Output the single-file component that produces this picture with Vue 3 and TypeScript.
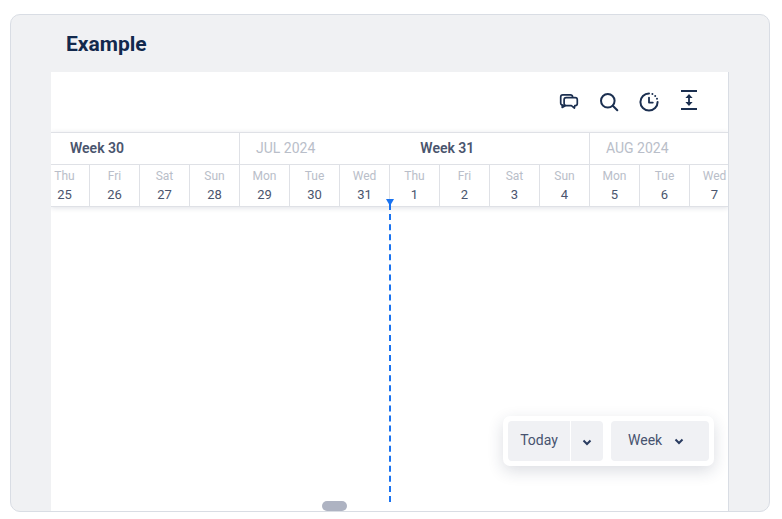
<script setup lang="ts">
interface Day { name: string; num: number }
const names = ['Thu', 'Fri', 'Sat', 'Sun', 'Mon', 'Tue', 'Wed']
const nums = [25, 26, 27, 28, 29, 30, 31, 1, 2, 3, 4, 5, 6, 7]
const days: Day[] = nums.map((num, i) => ({ name: names[i % 7], num }))
</script>

<template>
  <div class="page">
    <section class="card">
      <h1 class="title">Example</h1>
      <div class="panel">
        <div class="toolbar">
          <svg class="icon" viewBox="0 0 20 20" fill="none" stroke="#1b2f50" stroke-width="1.7" stroke-linejoin="round" stroke-linecap="round">
            <path d="M4.2 13.4 2.8 13C2 12.6 1.7 12 1.7 11.2V5C1.7 3.8 2.6 2.9 3.8 2.9H11.4C12.6 2.9 13.5 3.8 13.6 5" />
            <path d="M7.2 5.6H16.2C17.4 5.6 18.3 6.5 18.3 7.7V11.6C18.3 12.8 17.4 13.7 16.2 13.7H15.8L15.4 16.2 12.4 13.7H7.2C6 13.7 5.1 12.8 5.1 11.6V7.7C5.1 6.5 6 5.6 7.2 5.6Z" />
            <path d="M3.4 13.2 3.2 15.4 6.2 13.7" />
          </svg>
          <svg class="icon" viewBox="0 0 20 20" fill="none" stroke="#1b2f50" stroke-width="2" stroke-linecap="round">
            <circle cx="8.8" cy="8.8" r="6.8" />
            <path d="M13.8 13.8 18.3 18.3" />
          </svg>
          <svg class="icon" viewBox="0 0 20 20" fill="none" stroke="#1b2f50" stroke-width="2" stroke-linecap="round" stroke-linejoin="round">
            <path d="M10 1.4A8.6 8.6 0 1 0 18.6 10" />
            <path d="M10 5.6V10.6H13.8" stroke-width="1.8" />
            <path d="M13.4 2.1V2.1M16.2 4V4M18 6.8V6.8" />
          </svg>
          <svg class="icon tall" viewBox="0 0 20 20" fill="none" stroke="#1b2f50">
            <path d="M2 1H18M2 19H18" stroke-width="2" />
            <path d="M10 7V13" stroke-width="1.8" />
            <path d="M6.4 8 10 4 13.6 8ZM6.4 12 10 16 13.6 12Z" fill="#1b2f50" stroke="none" />
          </svg>
        </div>

        <div class="timeline">
          <div class="weeks">
            <div class="week week-first"><strong>Week 30</strong></div>
            <div class="week week-mid">
              <span class="month">JUL 2024</span>
              <strong>Week 31</strong>
            </div>
            <div class="week week-last"><span class="month">AUG 2024</span></div>
          </div>
          <div class="days">
            <div v-for="d in days" :key="d.name + d.num" class="day">
              <span class="day-name">{{ d.name }}</span>
              <span class="day-num">{{ d.num }}</span>
            </div>
          </div>
        </div>

        <div class="now-line">
          <span class="now-arrow"></span>
        </div>

        <div class="controls">
          <div class="split">
            <span class="today">Today</span>
            <span class="today-caret">
              <svg class="chevron" viewBox="0 0 10 7" fill="none" stroke="#2a3c60" stroke-width="2"><path d="M1.5 1.5 5 5 8.5 1.5" /></svg>
            </span>
          </div>
          <div class="week-select">
            <span>Week</span>
            <svg class="chevron" viewBox="0 0 10 7" fill="none" stroke="#2a3c60" stroke-width="2"><path d="M1.5 1.5 5 5 8.5 1.5" /></svg>
          </div>
        </div>

        <div class="handle"></div>
      </div>
    </section>
  </div>
</template>

<style>
html, body { margin: 0; background: #fff; }
</style>

<style scoped>
.page {
  width: 782px;
  height: 519px;
  padding: 14px 12px 7px 10px;
  box-sizing: border-box;
  font-family: Roboto, "Liberation Sans", sans-serif;
  overflow: hidden;
}
.card {
  height: 100%;
  box-sizing: border-box;
  background: #f0f1f3;
  border: 1px solid #d9dde4;
  border-radius: 10px;
  padding: 0 40px 0 40px;
  display: flex;
  flex-direction: column;
}
.title {
  margin: 0;
  height: 57px;
  box-sizing: border-box;
  padding: 16px 0 0 15px;
  font-size: 21px;
  line-height: 26px;
  font-weight: 700;
  color: #12294d;
}
.panel {
  position: relative;
  flex: 1;
  background: #fff;
  border-right: 1px solid #d9dde4;
  overflow: hidden;
}
.toolbar {
  height: 60px;
  box-sizing: border-box;
  display: flex;
  align-items: center;
  justify-content: flex-end;
  gap: 20px;
  padding-right: 29px;
}
.icon { width: 20px; height: 20px; display: block; margin-top: -1px; }
.icon.tall { margin-top: -4px; }
.timeline {
  border-top: 1px solid #dfe1e6;
  box-shadow: 0 1px 5px rgba(30, 45, 75, 0.14);
  position: relative;
}
.weeks {
  display: flex;
  height: 31px;
  border-bottom: 1px solid #dfe1e6;
}
.week {
  box-sizing: border-box;
  display: flex;
  align-items: center;
  padding-bottom: 2px;
  font-size: 14px;
  flex: none;
  border-right: 1px solid #dfe1e6;
  white-space: nowrap;
}
.week strong { font-weight: 600; color: #4a556e; }
.week-first { width: 189px; padding-left: 19px; }
.week-mid { width: 350px; padding-left: 16px; }
.week-mid strong { margin-left: 105px; }
.week-last { flex: 1; padding-left: 16px; border-right: 0; }
.month { color: #b9bec9; }
.days {
  display: flex;
  height: 41px;
  margin-left: -11px;
  border-bottom: 1px solid #dfe1e6;
}
.day {
  flex: none;
  width: 50px;
  box-sizing: border-box;
  border-right: 1px solid #dfe1e6;
  display: flex;
  flex-direction: column;
  align-items: center;
  padding-top: 3px;
}
.day-name {
  font-size: 12px;
  line-height: 16px;
  color: #b9bec9;
}
.day-num {
  font-size: 13px;
  line-height: 20px;
  margin-top: 1px;
  color: #4a556e;
}
.now-line {
  position: absolute;
  left: 338px;
  top: 132px;
  height: 298px;
  border-left: 2px dashed #1a73f0;
}
.now-arrow {
  position: absolute;
  left: -5px;
  top: -5px;
  width: 0;
  height: 0;
  border-left: 4px solid transparent;
  border-right: 4px solid transparent;
  border-top: 7px solid #1a73f0;
}
.controls {
  position: absolute;
  left: 452px;
  top: 344px;
  width: 211px;
  height: 50px;
  box-sizing: border-box;
  padding: 5px;
  display: flex;
  gap: 8px;
  background: #fff;
  border-radius: 7px;
  box-shadow: 0 5px 16px rgba(30, 45, 75, 0.16);
  font-size: 14px;
  color: #47536f;
}
.split { display: flex; gap: 1px; }
.today {
  width: 62px;
  background: #f0f1f4;
  border-radius: 4px 0 0 4px;
  display: flex;
  align-items: center;
  justify-content: center;
  padding-bottom: 2px;
  box-sizing: border-box;
}
.today-caret {
  width: 32px;
  background: #f0f1f4;
  border-radius: 0 4px 4px 0;
  display: flex;
  align-items: center;
  justify-content: center;
}
.week-select {
  width: 98px;
  background: #f0f1f4;
  border-radius: 4px;
  display: flex;
  align-items: center;
  padding: 0 0 2px 17px;
  box-sizing: border-box;
  gap: 12px;
}
.chevron { width: 10px; height: 7px; display: block; margin-top: 2px; }
.handle {
  position: absolute;
  left: 271px;
  bottom: 0;
  width: 25px;
  height: 10px;
  background: #aeb3c2;
  border-radius: 5px;
}
</style>
